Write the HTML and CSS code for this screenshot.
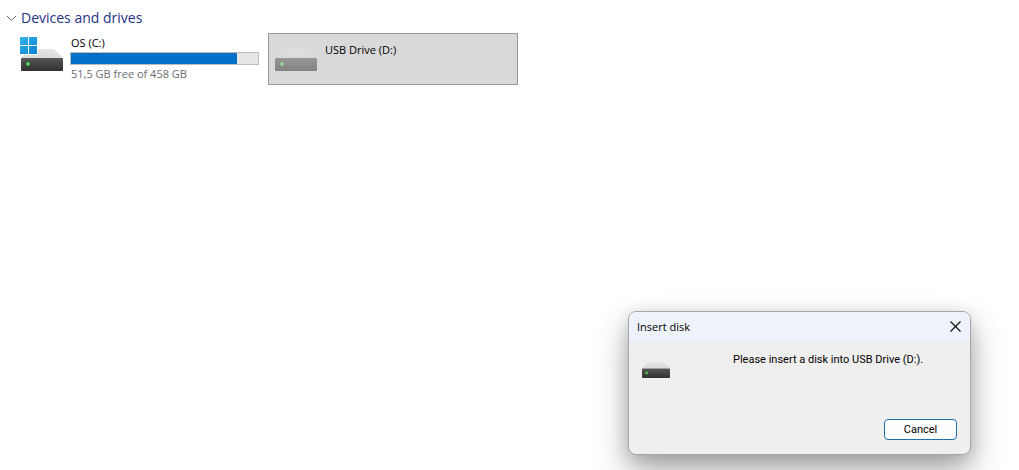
FILE: index.html
```
<!DOCTYPE html>
<html lang="en">
<head>
	<meta charset="UTF-8">
	<title>Devices and drives</title>
	<link rel="stylesheet" href="styles.css">
</head>
<body>
	<!-- gradients shared by the drive icons -->
	<svg class="defs" width="0" height="0" aria-hidden="true">
		<defs>
			<linearGradient id="front" x1="0" y1="0" x2="0" y2="1">
				<stop offset="0" stop-color="#5b5b5b"/>
				<stop offset="0.15" stop-color="#505050"/>
				<stop offset="1" stop-color="#303030"/>
			</linearGradient>
			<linearGradient id="lid" x1="0" y1="0" x2="0" y2="1">
				<stop offset="0" stop-color="#e6e6e6"/>
				<stop offset="1" stop-color="#dadada"/>
			</linearGradient>
			<linearGradient id="win" x1="0" y1="0" x2="1" y2="1">
				<stop offset="0" stop-color="#33b5ea"/>
				<stop offset="1" stop-color="#0a7fd4"/>
			</linearGradient>
			<symbol id="drive" viewBox="0 0 42 22">
				<path d="M9 0h24l9 9H0z" fill="url(#lid)"/>
				<rect x="0" y="9" width="42" height="13" rx="1" fill="url(#front)"/>
				<circle cx="7" cy="15" r="2.4" fill="#2f7a38"/>
				<circle cx="7" cy="15" r="1.4" fill="#6fe57c"/>
			</symbol>
		</defs>
	</svg>
	<main>
		<h1 class="group">
			<svg width="11" height="7" viewBox="0 0 11 7"><path d="M1 1l4.500 4.500L10 1" fill="none" stroke="#6a6a6a"/></svg>
			Devices and drives
		</h1>
		<ul class="drives">
			<li class="drive">
				<svg class="icon" width="43" height="36" viewBox="0 0 43 36">
					<svg x="1" y="12" width="42" height="22"><use href="#drive"/></svg>
					<path d="M0 0h18v18H0z" fill="#fff"/>
					<path d="M0 0h8v8H0zM9 0h8v8H9zM0 9h8v8H0zM9 9h8v8H9z" fill="url(#win)"/>
				</svg>
				<div class="info">
					<span class="name">OS (C:)</span>
					<div class="bar"><div class="used" style="width: 89%"></div></div>
					<span class="free">51,5 GB free of 458 GB</span>
				</div>
			</li>
			<li class="drive current">
				<svg class="icon empty" width="43" height="36" viewBox="0 0 43 36">
					<svg x="1" y="12" width="42" height="22"><use href="#drive"/></svg>
				</svg>
				<div class="info">
					<span class="name">USB Drive (D:)</span>
				</div>
			</li>
		</ul>
	</main>
	<div class="dialog" role="dialog" aria-labelledby="title">
		<div class="titlebar">
			<h2 id="title">Insert disk</h2>
			<button class="close" type="button" aria-label="Close">
				<svg width="11" height="11" viewBox="0 0 11 11"><path d="M0.500 0.500l10 10M10.500 0.500l-10 10" stroke="#111" stroke-width="1.200"/></svg>
			</button>
		</div>
		<div class="message">
			<svg width="28" height="16" viewBox="0 0 42 22" preserveAspectRatio="none"><use href="#drive"/></svg>
			<p>Please insert a disk into USB Drive (D:).</p>
		</div>
		<div class="buttons">
			<button class="cancel" type="button">Cancel</button>
		</div>
	</div>
</body>
</html>
```
FILE: styles.css
```
*{
	margin: 0px;
	padding: 0px;
	box-sizing: border-box;
}
html,body{
	height: 100%;
}
body{
	position: relative;
	overflow: hidden;
	background: #fff;
	color: #000;
	font-family: "Open Sans", "Noto Sans", sans-serif;
	font-size: 11px;
	line-height: 16px;
}
svg{
	display: block;
	flex: none;
}
.defs{
	position: absolute;
}
.group{
	display: flex;
	align-items: center;
	gap: 4px;
	padding: 8px 6px 5px;
	color: #1e3287;
	font-size: 14px;
	font-weight: 400;
	line-height: 20px;
}
.drives{
	display: grid;
	grid-template-columns: repeat(auto-fill, 250px);
	gap: 4px;
	padding-left: 14px;
	list-style: none;
}
.drive{
	display: flex;
	gap: 7px;
	height: 52px;
	padding: 1px 4px 1px 5px;
	border: 1px solid transparent;
}
.current{
	border-color: #999;
	background: #d9d9d9;
}
.icon{
	margin-top: 2px;
}
.empty{
	opacity: 0.5;
}
.info{
	flex: 1;
}
.name{
	display: block;
	padding-left: 1px;
}
.current .name{
	padding-top: 7px;
}
.bar{
	height: 13px;
	margin: 1px 0;
	border: 1px solid #bcbcbc;
	background: #e6e6e6;
}
.used{
	height: 100%;
	background: #0670c9;
}
.free{
	display: block;
	padding-left: 1px;
	color: #6d6d6d;
}
.dialog{
	position: absolute;
	right: 48px;
	bottom: 15px;
	width: 343px;
	border: 1px solid #a3a7a9;
	border-radius: 8px;
	background: #efefef;
	box-shadow: 0 16px 32px rgba(0,0,0,0.34), 0 2px 16px rgba(0,0,0,0.12);
}
.titlebar{
	display: flex;
	align-items: center;
	justify-content: space-between;
	height: 30px;
	padding: 0 9px 0 8px;
	border-radius: 7px 7px 0 0;
	background: #eef3fb;
}
.titlebar h2{
	font-size: 11px;
	font-weight: 400;
}
.close{
	padding: 0 0 2px;
	border: 0;
	background: none;
}
.message{
	display: flex;
	gap: 63px;
	padding: 10px 13px;
	font-family: Roboto, sans-serif;
}
.message svg{
	margin-top: 10px;
}
.buttons{
	display: flex;
	justify-content: flex-end;
	padding: 31px 13px 14px;
}
.cancel{
	width: 73px;
	height: 21px;
	border: 1px solid #1e6fae;
	border-radius: 4px;
	background: #fdfdfd;
	color: #000;
	font-family: Roboto, sans-serif;
	font-size: 11px;
}
```
